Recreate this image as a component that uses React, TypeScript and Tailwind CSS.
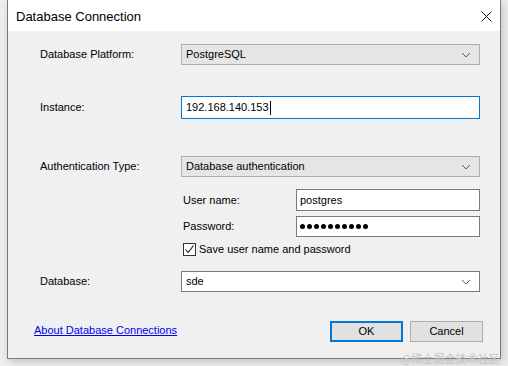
import React from 'react';

const Chevron = () => (
  <svg width="10" height="6" viewBox="0 0 10 6" className="shrink-0">
    <path d="M1 1 L5 5 L9 1" fill="none" stroke="#606060" strokeWidth="1" />
  </svg>
);

const ComboBox: React.FC<{ value: string; editable?: boolean }> = ({ value, editable }) => (
  <div
    className={`w-[299px] h-[21px] flex items-center justify-between pl-[4px] pr-[8px] border ${
      editable ? 'bg-white border-[#7a7a7a]' : 'bg-[#e5e5e5] border-[#adadad]'
    }`}
  >
    <span>{value}</span>
    <Chevron />
  </div>
);

export default function App() {
  return (
    <div className="w-[508px] h-[366px] bg-[#eeeeee] pl-[7px] text-[11px] text-black font-['Liberation_Sans',Arial,sans-serif] relative overflow-hidden">
      <div className="w-[494px] h-[359px] border-x border-b border-[#7a7a7a] shadow-[2px_3px_8px_rgba(0,0,0,0.18)] flex flex-col">
        {/* Title bar */}
        <div className="h-[31px] bg-white flex items-center justify-between pl-[8px] pr-[8px]">
          <span className="text-[13px] leading-none mt-[1px]">Database Connection</span>
          <svg width="11" height="11" viewBox="0 0 11 11" className="mt-[1px]">
            <path d="M0.5 0.5 L10.5 10.5 M10.5 0.5 L0.5 10.5" stroke="#111" strokeWidth="1" />
          </svg>
        </div>

        {/* Body */}
        <div className="flex-1 bg-[#f0f0f0] flex flex-col">
          <div className="flex items-center pl-[32px] mt-[13px]">
            <div className="w-[141px]">Database Platform:</div>
            <ComboBox value="PostgreSQL" />
          </div>

          <div className="flex items-center pl-[32px] mt-[31px]">
            <div className="w-[141px]">Instance:</div>
            <div className="w-[299px] h-[23px] bg-white border border-[#0078d7] flex items-center pl-[4px]">
              <span>192.168.140.153</span>
              <span className="w-px h-[14px] bg-black ml-px" />
            </div>
          </div>

          <div className="flex items-center pl-[32px] mt-[37px]">
            <div className="w-[141px]">Authentication Type:</div>
            <ComboBox value="Database authentication" />
          </div>

          <div className="pl-[173px] flex flex-col">
            <div className="flex items-center mt-[12px]">
              <div className="w-[115px] pl-[2px]">User name:</div>
              <div className="w-[184px] h-[22px] bg-white border border-[#7a7a7a] flex items-center pl-[3px]">
                postgres
              </div>
            </div>
            <div className="flex items-center mt-[5px]">
              <div className="w-[115px] pl-[2px]">Password:</div>
              <div className="w-[184px] h-[21px] bg-white border border-[#7a7a7a] flex items-center pl-[3px] gap-[2px]">
                {[...Array(10)].map((_, i) => (
                  <span key={i} className="w-[5px] h-[5px] rounded-full bg-black" />
                ))}
              </div>
            </div>
            <div className="flex items-center mt-[5px] pl-[2px] h-[14px]">
              <div className="w-[13px] h-[13px] border border-[#333] bg-white flex items-center justify-center mr-[3px]">
                <svg width="11" height="11" viewBox="0 0 11 11">
                  <path d="M1.5 5.5 L4.2 8.5 L9.5 1.5" fill="none" stroke="#111" strokeWidth="1.1" />
                </svg>
              </div>
              <span>Save user name and password</span>
            </div>
          </div>

          <div className="flex items-center pl-[32px] mt-[15px]">
            <div className="w-[141px]">Database:</div>
            <ComboBox value="sde" editable />
          </div>

          <div className="flex items-start justify-between pl-[26px] pr-[17px] mt-[29px]">
            <a href="#" className="text-[#0000ee] underline mt-[1px]">
              About Database Connections
            </a>
            <div className="flex gap-[7px]">
              <button className="w-[73px] h-[21px] bg-[#e1e1e1] border-2 border-[#0078d7] flex items-center justify-center">
                OK
              </button>
              <button className="w-[73px] h-[21px] bg-[#e1e1e1] border border-[#adadad] flex items-center justify-center">
                Cancel
              </button>
            </div>
          </div>
        </div>
      </div>

      <span className="absolute left-[401px] top-[353px] whitespace-nowrap text-[11px] leading-none text-[#c4c4c4] font-['Noto_Sans_CJK_SC',sans-serif]">
        @稀土掘金技术社区
      </span>
    </div>
  );
}
